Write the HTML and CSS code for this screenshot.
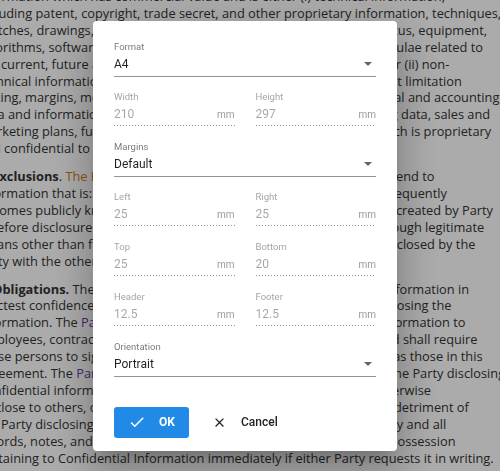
FILE: index.html
```html
<!DOCTYPE html>
<html lang="en">
<head>
<meta charset="UTF-8" />
<meta name="viewport" content="width=device-width, initial-scale=1" />
<title>Page Setup</title>
<link rel="stylesheet" href="styles.css">
</head>
<body>

<div class="doc">
  <p>Information which has commercial value and is either (i) technical information,<br>
  including patent, copyright, trade secret, and other proprietary information, techniques,<br>
  sketches, drawings, models, inventions, know-how, processes, apparatus, equipment,<br>
  algorithms, software programs, software source documents, and formulae related to<br>
  the current, future and proposed products and services of the Party, or (ii) non-<br>
  technical information relating to the Party's products, including without limitation<br>
  pricing, margins, merchandising plans and strategies, finances, financial and accounting<br>
  data and information, suppliers, customers, customer lists, purchasing data, sales and<br>
  marketing plans, future business plans and any other information which is proprietary<br>
  and confidential to the Party.</p>
  <p><b>2. Exclusions</b>. <span class="term-a">The Parties</span> agree Confidential Information does not extend to<br>
  information that is: (a) publicly known at time of its disclosure, or subsequently<br>
  becomes publicly known through no fault of the receiving Party; or (b) created by Party<br>
  it before disclosure by the disclosing Party; (c) is obtained by Party through legitimate<br>
  means other than from the disclosing Party; or (d) is independently disclosed by the<br>
  Party with the other Party's prior written approval.</p>
  <p><b>3. Obligations.</b> The Parties shall hold and maintain the Confidential Information in<br>
  strictest confidence for the sole and exclusive benefit of the Party disclosing the<br>
  Information. The <span class="term-b">Party</span> shall carefully restrict access to Confidential Information to<br>
  employees, contractors and third parties as is reasonably required and shall require<br>
  those persons to sign nondisclosure restrictions at least as protective as those in this<br>
  Agreement. The <span class="term-b">Party</span> shall not, without the prior written approval of the Party disclosing<br>
  Confidential information, use for its own benefit, publish, copy, or otherwise<br>
  disclose to others, or permit the use by others for its benefit or to the detriment of<br>
  the Party disclosing Confidential Information. The Party shall return any and all<br>
  records, notes, and other written, printed, or tangible materials in its possession<br>
  pertaining to Confidential Information immediately if either Party requests it in writing.</p>
</div>

<div class="backdrop">
  <div class="dialog" role="dialog" aria-label="Page setup">

    <div class="field">
      <label class="field-label">Format</label>
      <div class="field-input select">
        <span class="value">A4</span>
        <span class="arrow"></span>
      </div>
    </div>

    <div class="field-row">
      <div class="field disabled">
        <label class="field-label">Width</label>
        <div class="field-input"><span class="value">210</span><span class="unit">mm</span></div>
      </div>
      <div class="field disabled">
        <label class="field-label">Height</label>
        <div class="field-input"><span class="value">297</span><span class="unit">mm</span></div>
      </div>
    </div>

    <div class="field">
      <label class="field-label">Margins</label>
      <div class="field-input select">
        <span class="value">Default</span>
        <span class="arrow"></span>
      </div>
    </div>

    <div class="field-row">
      <div class="field disabled">
        <label class="field-label">Left</label>
        <div class="field-input"><span class="value">25</span><span class="unit">mm</span></div>
      </div>
      <div class="field disabled">
        <label class="field-label">Right</label>
        <div class="field-input"><span class="value">25</span><span class="unit">mm</span></div>
      </div>
    </div>

    <div class="field-row">
      <div class="field disabled">
        <label class="field-label">Top</label>
        <div class="field-input"><span class="value">25</span><span class="unit">mm</span></div>
      </div>
      <div class="field disabled">
        <label class="field-label">Bottom</label>
        <div class="field-input"><span class="value">20</span><span class="unit">mm</span></div>
      </div>
    </div>

    <div class="field-row">
      <div class="field disabled">
        <label class="field-label">Header</label>
        <div class="field-input"><span class="value">12.5</span><span class="unit">mm</span></div>
      </div>
      <div class="field disabled">
        <label class="field-label">Footer</label>
        <div class="field-input"><span class="value">12.5</span><span class="unit">mm</span></div>
      </div>
    </div>

    <div class="field last">
      <label class="field-label">Orientation</label>
      <div class="field-input select">
        <span class="value">Portrait</span>
        <span class="arrow"></span>
      </div>
    </div>

    <div class="actions">
      <button class="btn btn-primary">
        <svg width="18" height="18" viewBox="0 0 24 24"><path fill="currentColor" d="M9 16.17L4.83 12l-1.42 1.41L9 19 21 7l-1.41-1.41z"/></svg>
        OK
      </button>
      <button class="btn btn-flat">
        <svg width="15" height="15" viewBox="0 0 24 24"><path fill="currentColor" d="M19 6.41L17.59 5 12 10.59 6.41 5 5 6.41 10.59 12 5 17.59 6.41 19 12 13.41 17.59 19 19 17.59 13.41 12z"/></svg>
        Cancel
      </button>
    </div>

  </div>
</div>

</body>
</html>
```

FILE: styles.css
```css
html, body {
  margin: 0;
  padding: 0;
  height: 100%;
  overflow: hidden;
  background: #fff;
}

/* Document behind the dialog */
.doc {
  margin: -12px 0 0 -22px;
  font-family: 'Open Sans', sans-serif;
  font-size: 12.8px;
  line-height: 16.9px;
  color: #333;
  white-space: nowrap;
}
.doc p {
  margin: 0 0 11px;
}
.doc b {
  font-weight: 700;
}
.term-a {
  color: #c97d1c;
}
.term-b {
  color: #6a3aa8;
}

/* Dialog */
.backdrop {
  position: fixed;
  inset: 0;
  background: rgba(0, 0, 0, 0.33);
  display: flex;
  justify-content: center;
  align-items: center;
  padding-right: 10px;
}
.dialog {
  width: 262px;
  padding: 20px 21px 13px;
  background: #fff;
  border-radius: 4px;
  box-shadow: 0 11px 15px -7px rgba(0,0,0,0.2), 0 24px 38px 3px rgba(0,0,0,0.14), 0 9px 46px 8px rgba(0,0,0,0.12);
  font-family: Roboto, 'Liberation Sans', sans-serif;
}

.field {
  margin-bottom: 14px;
}
.field.last {
  margin-bottom: 0;
}
.field-row {
  display: grid;
  grid-template-columns: 1fr 1fr;
  column-gap: 21px;
}
.field-label {
  display: block;
  height: 12px;
  font-size: 9.5px;
  line-height: 12px;
  color: rgba(0, 0, 0, 0.54);
}
.field-input {
  display: flex;
  align-items: center;
  padding: 1.5px 0 1.5px;
  height: 20px;
  border-bottom: 1px solid rgba(0, 0, 0, 0.42);
}
.value {
  font-size: 12px;
  line-height: 20px;
  color: rgba(0, 0, 0, 0.87);
}
.unit {
  margin-left: auto;
  font-size: 10px;
  color: rgba(0, 0, 0, 0.42);
}
.arrow {
  margin-left: auto;
  margin-right: 4px;
  width: 0;
  height: 0;
  border-left: 4px solid transparent;
  border-right: 4px solid transparent;
  border-top: 4px solid rgba(0, 0, 0, 0.6);
}

.field.disabled .field-label {
  color: rgba(0, 0, 0, 0.38);
}
.field.disabled .value {
  color: rgba(0, 0, 0, 0.36);
}
.field.disabled .field-input {
  border-bottom: 1px solid transparent;
  background-image: linear-gradient(to right, rgba(0, 0, 0, 0.42) 33%, transparent 0%);
  background-size: 3px 1px;
  background-repeat: repeat-x;
  background-position: left bottom;
}

/* Buttons */
.actions {
  display: flex;
  align-items: center;
  margin-top: 30px;
}
.btn {
  display: flex;
  align-items: center;
  height: 31px;
  border: none;
  border-radius: 3px;
  font-family: Roboto, 'Liberation Sans', sans-serif;
  font-size: 12px;
  cursor: pointer;
}
.btn-primary {
  width: 75px;
  padding: 0 0 0 14px;
  gap: 13px;
  background: #2189e6;
  color: #fff;
  font-weight: 700;
}
.btn-flat {
  margin-left: 19px;
  padding: 0 8px 0 4px;
  gap: 14px;
  background: transparent;
  color: #222;
  font-weight: 500;
}
.btn-flat svg {
  color: #222;
}
```
